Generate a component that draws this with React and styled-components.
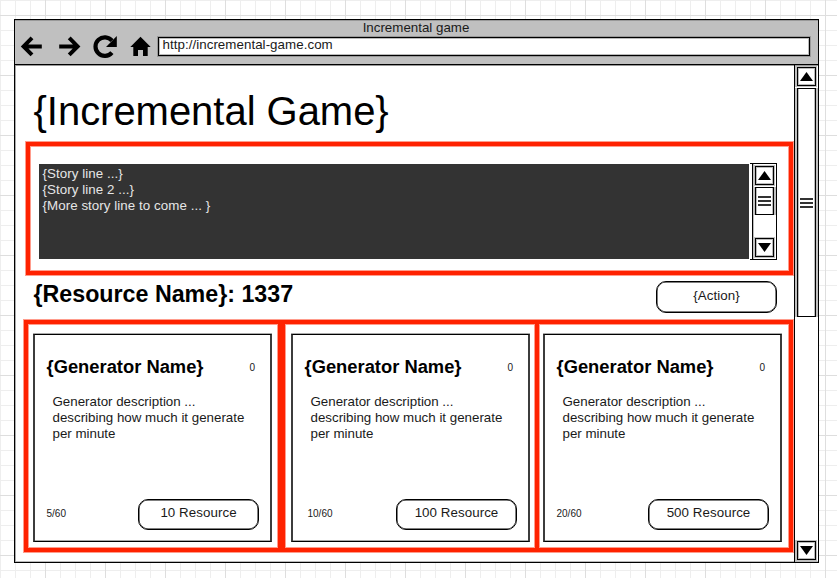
import React from "react";
import styled, { createGlobalStyle } from "styled-components";

const RED = "#ff2200";
const RED_SOFT = "#ff9c8c";
const SOFT = "#c0c0c0";

const GlobalStyle = createGlobalStyle`
  *, *::before, *::after { box-sizing: border-box; }
  body { margin: 0; overflow: hidden; }
  h1, h2, h3, p { margin: 0; }
`;

const Canvas = styled.div`
  width: 837px;
  height: 578px;
  padding: 19px 0 0 14px;
  font-family: "Liberation Sans", Arial, sans-serif;
  font-size: 13.33px;
  line-height: 16px;
  color: #1a1a1a;
  background-color: #fff;
  background-image:
    linear-gradient(90deg, #dedede 1px, transparent 1px),
    linear-gradient(#dedede 1px, transparent 1px),
    linear-gradient(90deg, #eeeeee 1px, transparent 1px),
    linear-gradient(#eeeeee 1px, transparent 1px);
  background-size: 60px 60px, 60px 60px, 15px 15px, 15px 15px;
  background-position: 45px 0, 0 15px, 0 0, 0 0;
`;

const Browser = styled.div`
  display: flex;
  flex-direction: column;
  width: 805px;
  height: 544px;
  border: 1px solid #000;
  background: #fff;
  box-shadow: inset 1px 0 #aaa, inset 0 -1px #bbb;
`;

const Chrome = styled.header`
  display: grid;
  grid-template: 17px 27px / 143px 652px;
  flex: none;
  height: 45px;
  background: #c0c0c0;
  border-bottom: 1px solid #000;
  box-shadow: 0 1px #999, inset 0 1px #999;
`;

const PageTitle = styled.div`
  grid-column: 1 / -1;
  padding-left: 7px;
  text-align: center;
  line-height: 16px;
`;

const Nav = styled.nav`
  display: flex;
  height: 24px;
  margin: -3px 0 0 5px;
  svg { flex: none; display: block; width: 24px; height: 24px; overflow: visible; }
  svg:nth-child(2) { margin-left: 14px; }
  svg:nth-child(3) { margin-left: 11px; }
  svg:nth-child(4) { margin-left: 12px; }
`;

const Address = styled.div`
  height: 19px;
  padding-left: 3.5px;
  border: 1px solid #000;
  box-shadow: inset 0 0 0 1px #bbb, 0 0 0 1px #999;
  background: #fff;
  line-height: 14px;
  letter-spacing: 0.05px;
`;

const Viewport = styled.div`
  display: flex;
  flex: 1;
  min-height: 0;
`;

const Page = styled.main`
  width: 779px;
  flex: none;
  padding: 22px 0 0 9px;
`;

const GameTitle = styled.h1`
  padding-left: 9.5px;
  height: 55px;
  font-size: 40px;
  line-height: 48px;
  letter-spacing: -0.03px;
  font-weight: 400;
  color: #000;
`;

const StoryPanel = styled.section`
  display: flex;
  align-items: flex-start;
  width: 767px;
  height: 133px;
  margin-left: 2px;
  padding: 18px 0 0 9px;
  border: 4px solid ${RED};
  box-shadow: 0 0 0 1px ${RED_SOFT}, inset 0 0 0 1px ${RED_SOFT};
`;

const Story = styled.div`
  width: 710px;
  height: 95px;
  padding: 2px 3.5px;
  background: #333;
  color: #e6e6e6;
  letter-spacing: 0.06px;
`;

const StoryScroll = styled.div`
  position: relative;
  display: flex;
  flex-direction: column;
  align-items: center;
  width: 25px;
  height: 97px;
  margin: -1px 0 0 3px;
  padding: 2px 0;
  border: 1px solid #000;
  background: #fff;
  box-shadow: inset 1px 0 #bbb;
  &::before, &::after {
    content: "";
    position: absolute;
    left: -3px;
    width: 3px;
    height: 1px;
    background: #000;
  }
  &::before { top: -1px; }
  &::after { bottom: -1px; }
`;

const PageScroll = styled.aside`
  display: flex;
  flex-direction: column;
  align-items: center;
  width: 24px;
  padding: 2px 0;
  border-left: 1px solid #000;
`;

const ScrollButton = styled.div`
  flex: none;
  display: grid;
  place-items: center;
  width: 19px;
  height: 19px;
  margin-top: ${(p) => (p.$last ? "auto" : 0)};
  border: 1px solid #000;
  background: #fff;
  box-shadow: 0 0 0 1px ${SOFT}, -1px 0 0 1px ${SOFT}, inset 0 0 0 1px #bbb;
  svg { display: block; transform: ${(p) => (p.$last ? "rotate(180deg)" : "none")}; }
`;

const Thumb = styled.div`
  flex: none;
  display: flex;
  flex-direction: column;
  align-items: center;
  justify-content: center;
  gap: 2px;
  width: 19px;
  height: ${(p) => p.$height}px;
  margin-top: 2px;
  border: 1px solid #000;
  background: #fff;
  box-shadow: 1px 0 0 ${SOFT}, 2px 0 0 ${SOFT}, -1px 0 0 ${SOFT}, -2px 0 0 ${SOFT},
    inset 1px 0 #bbb, inset -1px 0 #bbb;
`;

const Grip = styled.span`
  width: 13px;
  height: 2px;
  background: #333;
`;

const ResourceBar = styled.div`
  display: flex;
  align-items: flex-start;
  height: 45px;
  padding: 6px 0 0 9.5px;
`;

const ResourceTitle = styled.h2`
  width: 622.5px;
  font-size: 23.24px;
  line-height: 26px;
  color: #000;
`;

const Button = styled.button`
  flex: none;
  width: 121px;
  height: ${(p) => (p.$tall ? 32 : 31)}px;
  padding: 0 0 ${(p) => (p.$tall ? 2 : 3)}px;
  border: 1.5px solid #000;
  border-radius: 10px;
  background: #fff;
  color: #1a1a1a;
  font: inherit;
  letter-spacing: 0.06px;
  box-shadow: inset 0 0 0 0.5px #000;
`;

const Generators = styled.div`
  display: flex;
  width: 769px;
  box-shadow: 0 0 0 1px ${RED_SOFT};
`;

const GeneratorFrame = styled.section`
  flex: none;
  width: 258px;
  height: 232px;
  margin-left: ${(p) => p.$overlap}px;
  padding: 10px 0 0 ${(p) => p.$inset}px;
  border: 4px solid ${RED};
  box-shadow: inset 0 0 0 1px ${RED_SOFT};
`;

const Card = styled.article`
  display: flex;
  flex-direction: column;
  width: 239px;
  height: 208px;
  padding: 20px 11px 11px 11.5px;
  border: solid #3c3c3c;
  border-width: 1px 2px;
  border-top-color: #000;
  border-bottom-color: #000;
  box-shadow: 0 -1px #aaa, inset 0 -1px #aaa;
`;

const CardHead = styled.div`
  display: flex;
  align-items: baseline;
  justify-content: space-between;
  padding-right: 4px;
`;

const CardTitle = styled.h3`
  font-size: 18.35px;
  line-height: 24px;
  color: #000;
`;

const Small = styled.span`
  font-size: 10px;
  line-height: 12px;
  color: #1a1a1a;
`;

const Count = styled(Small)`
  padding-bottom: 2px;
  transform: translateY(-2px);
`;

const Description = styled.p`
  width: 200px;
  margin: 15px 0 0 6px;
`;

const CardFoot = styled.div`
  display: flex;
  align-items: center;
  justify-content: space-between;
  margin-top: auto;
  padding-left: ${(p) => p.$shift}px;
  ${Small} { margin-top: -2px; }
`;

const Triangle = () => (
  <svg width="13" height="9" viewBox="0 0 13 9">
    <path d="M6.5 0 13 9H0Z" fill="#000" />
  </svg>
);

const Grips = () => (
  <>
    <Grip />
    <Grip />
    <Grip />
  </>
);

const generators = [
  { cost: "10 Resource", progress: "5/60", overlap: 0, inset: 5, shift: 0 },
  { cost: "100 Resource", progress: "10/60", overlap: -1, inset: 6, shift: 3 },
  { cost: "500 Resource", progress: "20/60", overlap: -4, inset: 4, shift: 0 },
];

export default function App() {
  return (
    <Canvas>
      <GlobalStyle />
      <Browser>
        <Chrome>
          <PageTitle>Incremental game</PageTitle>
          <Nav>
            <svg viewBox="0 0 24 24" fill="none" stroke="#000" strokeWidth="4">
              <path d="M12 3.9 3.6 12.4 12 20.9M4 12.4H21.8" />
            </svg>
            <svg viewBox="0 0 24 24" fill="none" stroke="#000" strokeWidth="4">
              <path d="M11.2 3.9 19.6 12.4 11.2 20.9M19 12.4H1.2" />
            </svg>
            <svg viewBox="0 0 24 24">
              <path d="M19 6.7A9.3 9.3 0 1 0 18.9 18.6" fill="none" stroke="#000" strokeWidth="4.2" />
              <path d="M23.8 2V13H13Z" fill="#000" />
            </svg>
            <svg viewBox="0 0 24 24">
              <path d="M11.5 2.8 21.7 13H18.7V22H14V16H9V22H4.3V13H1.3Z" fill="#000" />
            </svg>
          </Nav>
          <Address>http://incremental-game.com</Address>
        </Chrome>
        <Viewport>
          <Page>
            <GameTitle>{"{Incremental Game}"}</GameTitle>
            <StoryPanel>
              <Story>
                <p>{"{Story line ...}"}</p>
                <p>{"{Story line 2 ...}"}</p>
                <p>{"{More story line to come ... }"}</p>
              </Story>
              <StoryScroll>
                <ScrollButton><Triangle /></ScrollButton>
                <Thumb $height={28}><Grips /></Thumb>
                <ScrollButton $last><Triangle /></ScrollButton>
              </StoryScroll>
            </StoryPanel>
            <ResourceBar>
              <ResourceTitle>{"{Resource Name}: 1337"}</ResourceTitle>
              <Button $tall>{"{Action}"}</Button>
            </ResourceBar>
            <Generators>
              {generators.map((g) => (
                <GeneratorFrame key={g.cost} $overlap={g.overlap} $inset={g.inset}>
                  <Card>
                    <CardHead>
                      <CardTitle>{"{Generator Name}"}</CardTitle>
                      <Count>0</Count>
                    </CardHead>
                    <Description>
                      Generator description ...<br />
                      describing how much it generate<br />
                      per minute
                    </Description>
                    <CardFoot $shift={g.shift}>
                      <Small>{g.progress}</Small>
                      <Button>{g.cost}</Button>
                    </CardFoot>
                  </Card>
                </GeneratorFrame>
              ))}
            </Generators>
          </Page>
          <PageScroll>
            <ScrollButton><Triangle /></ScrollButton>
            <Thumb $height={229}><Grips /></Thumb>
            <ScrollButton $last><Triangle /></ScrollButton>
          </PageScroll>
        </Viewport>
      </Browser>
    </Canvas>
  );
}
